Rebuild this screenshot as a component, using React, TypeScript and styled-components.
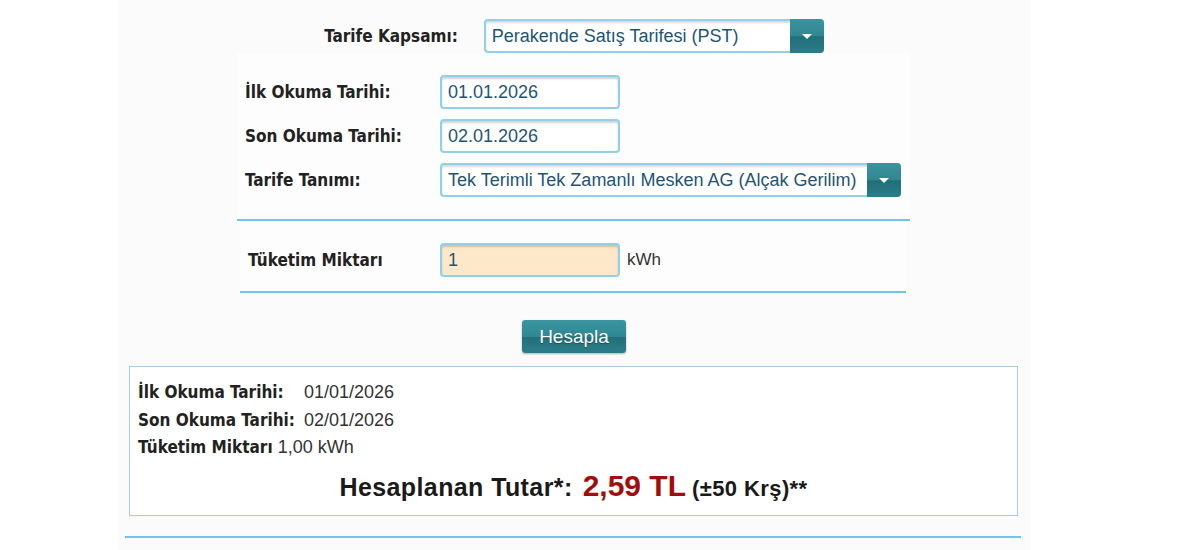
import React from 'react';
import styled, { createGlobalStyle } from 'styled-components';

const GlobalStyle = createGlobalStyle`
  body {
    margin: 0;
    background: #ffffff;
    font-family: "Liberation Sans", Arial, sans-serif;
  }
`;

const StyledPage = styled.div`
  width: 912px;
  margin-left: 118px;
  padding-top: 19px;
  background-color: #fbfbfb;
  min-height: 531px;
`;

const StyledTopRow = styled.div`
  display: flex;
  flex-direction: row;
  justify-content: center;
  align-items: center;
  gap: 26px;
`;

const StyledLabel = styled.label<{ width?: string }>`
  font-family: "DejaVu Sans Condensed", "DejaVu Sans", sans-serif;
  font-stretch: condensed;
  font-weight: 700;
  font-size: 17px;
  color: #222;
  width: ${props => props.width || 'auto'};
`;

const StyledFormBlock = styled.div<{ left: string; right: string; bottom: string }>`
  margin: 0 ${props => props.right} 0 ${props => props.left};
  display: flex;
  flex-direction: column;
  gap: 10px;
  padding: 22px 0 ${props => props.bottom} 8px;
  background-color: #fdfdfd;
  border-bottom: 2px solid #6ec6e8;
`;

const StyledRow = styled.div`
  display: flex;
  flex-direction: row;
  align-items: center;
`;

const StyledInput = styled.div<{ bg?: string }>`
  box-sizing: border-box;
  width: 180px;
  height: 34px;
  padding: 0 6px;
  display: flex;
  align-items: center;
  font-size: 18px;
  color: #1e5575;
  background-color: ${props => props.bg || '#ffffff'};
  border: 2px solid #8fd0ea;
  border-radius: 4px;
  box-shadow: inset 0 2px 2px rgba(0, 0, 0, 0.18);
`;

const StyledSelect = styled.div<{ width: string }>`
  box-sizing: border-box;
  width: ${props => props.width};
  height: 34px;
  display: flex;
  flex-direction: row;
  font-size: 18px;
  color: #1e5575;
  background-color: #fff;
  border: 2px solid #8fd0ea;
  border-right: none;
  border-radius: 4px;
  box-shadow: inset 0 2px 2px rgba(0, 0, 0, 0.15);
`;

const StyledSelectText = styled.div`
  flex: 1;
  display: flex;
  align-items: center;
  padding: 0 4px 0 6px;
  white-space: nowrap;
  overflow: hidden;
`;

const StyledSelectButton = styled.div`
  width: 34px;
  margin: -2px 0;
  display: flex;
  align-items: center;
  justify-content: center;
  border-radius: 0 4px 4px 0;
  background: linear-gradient(#3a939e 0%, #2f8792 50%, #226e78 52%, #2a7d88 100%);
`;

const StyledArrow = styled.div`
  width: 0;
  height: 0;
  border-left: 5px solid transparent;
  border-right: 5px solid transparent;
  border-top: 5px solid #fff;
`;

const StyledUnit = styled.span`
  margin-left: 7px;
  font-size: 17px;
  color: #333;
`;

const StyledButtonRow = styled.div`
  display: flex;
  justify-content: center;
  padding: 27px 0 13px;
`;

const StyledButton = styled.button`
  width: 104px;
  height: 33px;
  border: none;
  border-radius: 3px;
  font-family: "Liberation Sans", Arial, sans-serif;
  font-size: 19px;
  color: #fff;
  text-shadow: 0 1px 1px rgba(0, 0, 0, 0.35);
  background: linear-gradient(#3b96a1 0%, #2f8892 50%, #236f79 52%, #2b7f8a 100%);
  box-shadow: 0 1px 2px rgba(0, 0, 0, 0.3);
`;

const StyledResult = styled.div`
  margin: 0 12px 0 11px;
  height: 150px;
  box-sizing: border-box;
  padding: 15px 8px 0 8px;
  background-color: #fff;
  border: 1px solid #a9cbe0;
`;

const StyledResultLine = styled.div`
  display: flex;
  flex-direction: row;
  align-items: baseline;
  height: 27.5px;
  font-size: 18px;
  color: #333;
`;

const StyledResultLabel = styled(StyledLabel)`
  margin-right: 5px;
`;

const StyledTotal = styled.div`
  display: flex;
  flex-direction: row;
  justify-content: center;
  align-items: baseline;
  margin-top: 4px;
  font-weight: 700;
  color: #1a1a1a;
`;

const StyledTotalLabel = styled.span`
  font-size: 25px;
  letter-spacing: 0.4px;
`;

const StyledAmount = styled.span`
  margin-left: 10px;
  font-size: 30px;
  color: #a30d0d;
`;

const StyledTolerance = styled.span`
  margin-left: 6px;
  font-size: 22px;
  letter-spacing: 0.4px;
`;

const StyledFooterLine = styled.div`
  margin: 20px 9px 0 7px;
  border-bottom: 2px solid #6ec6e8;
`;

export default function App() {
  return (
    <>
      <GlobalStyle />
      <StyledPage>
        <StyledTopRow>
          <StyledLabel>Tarife Kapsamı:</StyledLabel>
          <StyledSelect width="340px">
            <StyledSelectText>Perakende Satış Tarifesi (PST)</StyledSelectText>
            <StyledSelectButton>
              <StyledArrow />
            </StyledSelectButton>
          </StyledSelect>
        </StyledTopRow>

        <StyledFormBlock left="119px" right="120px" bottom="22px">
          <StyledRow>
            <StyledLabel width="195px">İlk Okuma Tarihi:</StyledLabel>
            <StyledInput>01.01.2026</StyledInput>
          </StyledRow>
          <StyledRow>
            <StyledLabel width="195px">Son Okuma Tarihi:</StyledLabel>
            <StyledInput>02.01.2026</StyledInput>
          </StyledRow>
          <StyledRow>
            <StyledLabel width="195px">Tarife Tanımı:</StyledLabel>
            <StyledSelect width="461px">
              <StyledSelectText>Tek Terimli Tek Zamanlı Mesken AG (Alçak Gerilim)</StyledSelectText>
              <StyledSelectButton>
                <StyledArrow />
              </StyledSelectButton>
            </StyledSelect>
          </StyledRow>
        </StyledFormBlock>

        <StyledFormBlock left="122px" right="124px" bottom="14px">
          <StyledRow>
            <StyledLabel width="192px">Tüketim Miktarı</StyledLabel>
            <StyledInput bg="#fde9c9">1</StyledInput>
            <StyledUnit>kWh</StyledUnit>
          </StyledRow>
        </StyledFormBlock>

        <StyledButtonRow>
          <StyledButton>Hesapla</StyledButton>
        </StyledButtonRow>

        <StyledResult>
          <StyledResultLine>
            <StyledResultLabel width="161px">İlk Okuma Tarihi:</StyledResultLabel>
            01/01/2026
          </StyledResultLine>
          <StyledResultLine>
            <StyledResultLabel width="161px">Son Okuma Tarihi:</StyledResultLabel>
            02/01/2026
          </StyledResultLine>
          <StyledResultLine>
            <StyledResultLabel>Tüketim Miktarı</StyledResultLabel>
            1,00 kWh
          </StyledResultLine>
          <StyledTotal>
            <StyledTotalLabel>Hesaplanan Tutar*:</StyledTotalLabel>
            <StyledAmount>2,59 TL</StyledAmount>
            <StyledTolerance>(±50 Krş)**</StyledTolerance>
          </StyledTotal>
        </StyledResult>

        <StyledFooterLine />
      </StyledPage>
    </>
  );
}
